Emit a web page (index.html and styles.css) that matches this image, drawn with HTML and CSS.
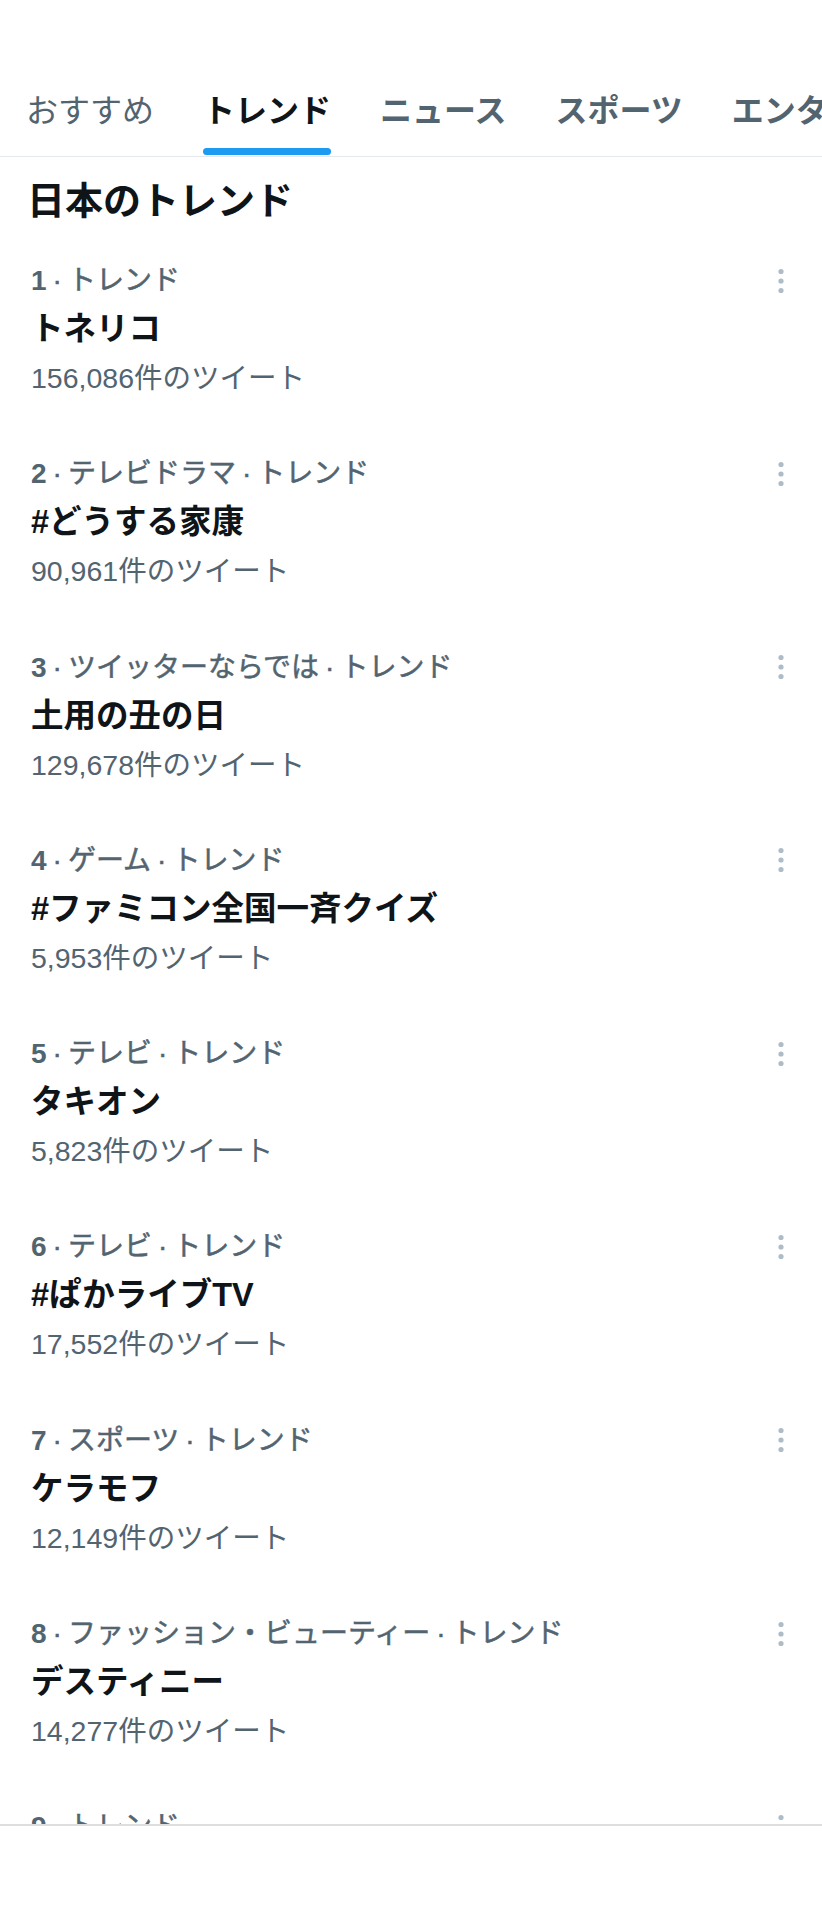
FILE: index.html
```html
<!DOCTYPE html>
<html lang="ja">
<head>
<meta charset="utf-8">
<title>トレンド</title>
<link rel="stylesheet" href="styles.css">
</head>
<body>
<div class="screen">
  <div class="main">
    <nav class="tabs">
      <div class="tab tab-light"><span class="tab-text">おすすめ</span><span class="tab-bar"></span></div>
      <div class="tab tab-active"><span class="tab-text">トレンド</span><span class="tab-bar"></span></div>
      <div class="tab"><span class="tab-text">ニュース</span><span class="tab-bar"></span></div>
      <div class="tab"><span class="tab-text">スポーツ</span><span class="tab-bar"></span></div>
      <div class="tab"><span class="tab-text">エンターテイメント</span><span class="tab-bar"></span></div>
    </nav>
    <h1 class="heading">日本のトレンド</h1>
    <ul class="trends">
      <li class="trend">
        <div class="trend-body">
          <div class="trend-meta"><b>1</b><span class="sep">·</span>トレンド</div>
          <div class="trend-title">トネリコ</div>
          <div class="trend-count">156,086件のツイート</div>
        </div>
        <div class="more"><svg viewBox="0 0 10 30" width="10" height="30"><circle cx="5" cy="5.5" r="2.6"/><circle cx="5" cy="15" r="2.6"/><circle cx="5" cy="24.5" r="2.6"/></svg></div>
      </li>
      <li class="trend">
        <div class="trend-body">
          <div class="trend-meta"><b>2</b><span class="sep">·</span>テレビドラマ<span class="sep">·</span>トレンド</div>
          <div class="trend-title">#どうする家康</div>
          <div class="trend-count">90,961件のツイート</div>
        </div>
        <div class="more"><svg viewBox="0 0 10 30" width="10" height="30"><circle cx="5" cy="5.5" r="2.6"/><circle cx="5" cy="15" r="2.6"/><circle cx="5" cy="24.5" r="2.6"/></svg></div>
      </li>
      <li class="trend">
        <div class="trend-body">
          <div class="trend-meta"><b>3</b><span class="sep">·</span>ツイッターならでは<span class="sep">·</span>トレンド</div>
          <div class="trend-title">土用の丑の日</div>
          <div class="trend-count">129,678件のツイート</div>
        </div>
        <div class="more"><svg viewBox="0 0 10 30" width="10" height="30"><circle cx="5" cy="5.5" r="2.6"/><circle cx="5" cy="15" r="2.6"/><circle cx="5" cy="24.5" r="2.6"/></svg></div>
      </li>
      <li class="trend">
        <div class="trend-body">
          <div class="trend-meta"><b>4</b><span class="sep">·</span>ゲーム<span class="sep">·</span>トレンド</div>
          <div class="trend-title">#ファミコン全国一斉クイズ</div>
          <div class="trend-count">5,953件のツイート</div>
        </div>
        <div class="more"><svg viewBox="0 0 10 30" width="10" height="30"><circle cx="5" cy="5.5" r="2.6"/><circle cx="5" cy="15" r="2.6"/><circle cx="5" cy="24.5" r="2.6"/></svg></div>
      </li>
      <li class="trend">
        <div class="trend-body">
          <div class="trend-meta"><b>5</b><span class="sep">·</span>テレビ<span class="sep">·</span>トレンド</div>
          <div class="trend-title">タキオン</div>
          <div class="trend-count">5,823件のツイート</div>
        </div>
        <div class="more"><svg viewBox="0 0 10 30" width="10" height="30"><circle cx="5" cy="5.5" r="2.6"/><circle cx="5" cy="15" r="2.6"/><circle cx="5" cy="24.5" r="2.6"/></svg></div>
      </li>
      <li class="trend">
        <div class="trend-body">
          <div class="trend-meta"><b>6</b><span class="sep">·</span>テレビ<span class="sep">·</span>トレンド</div>
          <div class="trend-title">#ぱかライブTV</div>
          <div class="trend-count">17,552件のツイート</div>
        </div>
        <div class="more"><svg viewBox="0 0 10 30" width="10" height="30"><circle cx="5" cy="5.5" r="2.6"/><circle cx="5" cy="15" r="2.6"/><circle cx="5" cy="24.5" r="2.6"/></svg></div>
      </li>
      <li class="trend">
        <div class="trend-body">
          <div class="trend-meta"><b>7</b><span class="sep">·</span>スポーツ<span class="sep">·</span>トレンド</div>
          <div class="trend-title">ケラモフ</div>
          <div class="trend-count">12,149件のツイート</div>
        </div>
        <div class="more"><svg viewBox="0 0 10 30" width="10" height="30"><circle cx="5" cy="5.5" r="2.6"/><circle cx="5" cy="15" r="2.6"/><circle cx="5" cy="24.5" r="2.6"/></svg></div>
      </li>
      <li class="trend">
        <div class="trend-body">
          <div class="trend-meta"><b>8</b><span class="sep">·</span>ファッション・ビューティー<span class="sep">·</span>トレンド</div>
          <div class="trend-title">デスティニー</div>
          <div class="trend-count">14,277件のツイート</div>
        </div>
        <div class="more"><svg viewBox="0 0 10 30" width="10" height="30"><circle cx="5" cy="5.5" r="2.6"/><circle cx="5" cy="15" r="2.6"/><circle cx="5" cy="24.5" r="2.6"/></svg></div>
      </li>
      <li class="trend">
        <div class="trend-body">
          <div class="trend-meta"><b>9</b><span class="sep">·</span>トレンド</div>
          <div class="trend-title">&nbsp;</div>
          <div class="trend-count">&nbsp;</div>
        </div>
        <div class="more"><svg viewBox="0 0 10 30" width="10" height="30"><circle cx="5" cy="5.5" r="2.6"/><circle cx="5" cy="15" r="2.6"/><circle cx="5" cy="24.5" r="2.6"/></svg></div>
      </li>
    </ul>
  </div>
  <div class="bottom-bar"></div>
</div>
</body>
</html>
```
FILE: styles.css
```css
* { box-sizing: border-box; }

html, body {
  margin: 0;
  padding: 0;
  background: #ffffff;
}

body {
  font-family: "Liberation Sans", "Noto Sans CJK JP", sans-serif;
  color: #0f1419;
  width: 822px;
  overflow: hidden;
}

.screen {
  width: 822px;
  height: 1920px;
  display: flex;
  flex-direction: column;
}

.main {
  height: 1824px;
  overflow: hidden;
  flex: none;
}

.tabs {
  display: flex;
  gap: 49px;
  height: 157px;
  padding-left: 26px;
  border-bottom: 1px solid #e3e9ed;
  white-space: nowrap;
  overflow: hidden;
}

.tab {
  display: flex;
  flex-direction: column;
  justify-content: flex-end;
  flex: none;
  color: #536471;
  font-size: 32px;
  font-weight: 700;
}

.tab-text {
  line-height: 38px;
  margin-bottom: 18px;
}

.tab-bar {
  height: 7px;
  border-radius: 4px;
  margin-bottom: 1px;
  background: transparent;
}

.tab-light { font-weight: 400; }

.tab-active { color: #0f1419; }
.tab-active .tab-bar { background: #1d9bf0; }

.heading {
  margin: 20px 0 7px;
  padding-left: 27px;
  font-size: 38px;
  line-height: 48px;
  font-weight: 700;
  color: #0f1419;
}

.trends {
  list-style: none;
  margin: 0;
  padding: 0;
}

.trend {
  display: flex;
  align-items: flex-start;
  justify-content: space-between;
  padding: 24px 31px 22.3px 31px;
  height: 193.3px;
}

.trend-body {
  display: flex;
  flex-direction: column;
}

.trend-meta {
  font-size: 28px;
  line-height: 49px;
  color: #536471;
  font-weight: 400;
  -webkit-text-stroke: 0.5px #536471;
}

.trend-meta b { font-weight: 700; -webkit-text-stroke: 0; }

.sep {
  padding: 0 6px;
}

.trend-title {
  font-size: 32.5px;
  line-height: 49px;
  font-weight: 700;
  color: #0f1419;
}

.trend-count {
  font-size: 28.5px;
  line-height: 49px;
  color: #536471;
}

.more {
  width: 20px;
  height: 49px;
  display: flex;
  align-items: center;
  justify-content: center;
}

.more svg { fill: #aebcc7; display: block; }

.bottom-bar {
  flex: 1;
  border-top: 2px solid #dedede;
  background: #ffffff;
}
```
